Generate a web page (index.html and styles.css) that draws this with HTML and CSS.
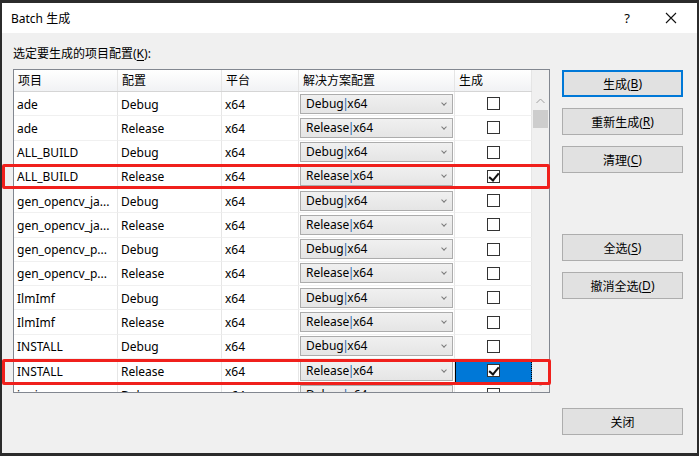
FILE: index.html
```html
<!DOCTYPE html>
<html>
<head>
<meta charset="utf-8">
<link rel="stylesheet" href="styles.css">
</head>
<body>
<div class="window">
  <div class="titlebar">
    <span class="title">Batch 生成</span>
    <span class="tb-help">?</span>
    <span class="tb-close"><svg width="12" height="12" viewBox="0 0 12 12"><path d="M1 1 L11 11 M11 1 L1 11" stroke="#111" stroke-width="1.1" fill="none"/></svg></span>
  </div>
  <div class="content">
    <div class="left">
      <div class="label">选定要生成的项目配置(<u>K</u>):</div>
      <div class="grid">
        <div class="table">
          <div class="hdr">
            <div class="hc">项目</div><div class="hc">配置</div><div class="hc">平台</div><div class="hc">解决方案配置</div><div class="hc">生成</div>
          </div>
          <div class="rows">
            <div class="row"><div class="c">ade</div><div class="c">Debug</div><div class="c">x64</div><div class="c cc"><div class="combo">Debug<span class="pipe">|</span>x64<span class="arr"></span></div></div><div class="c cb"><span class="chk"></span></div></div>
            <div class="row"><div class="c">ade</div><div class="c">Release</div><div class="c">x64</div><div class="c cc"><div class="combo">Release<span class="pipe">|</span>x64<span class="arr"></span></div></div><div class="c cb"><span class="chk"></span></div></div>
            <div class="row"><div class="c">ALL_BUILD</div><div class="c">Debug</div><div class="c">x64</div><div class="c cc"><div class="combo">Debug<span class="pipe">|</span>x64<span class="arr"></span></div></div><div class="c cb"><span class="chk"></span></div></div>
            <div class="row"><div class="c">ALL_BUILD</div><div class="c">Release</div><div class="c">x64</div><div class="c cc"><div class="combo">Release<span class="pipe">|</span>x64<span class="arr"></span></div></div><div class="c cb"><span class="chk on"></span></div></div>
            <div class="row"><div class="c">gen_opencv_ja...</div><div class="c">Debug</div><div class="c">x64</div><div class="c cc"><div class="combo">Debug<span class="pipe">|</span>x64<span class="arr"></span></div></div><div class="c cb"><span class="chk"></span></div></div>
            <div class="row"><div class="c">gen_opencv_ja...</div><div class="c">Release</div><div class="c">x64</div><div class="c cc"><div class="combo">Release<span class="pipe">|</span>x64<span class="arr"></span></div></div><div class="c cb"><span class="chk"></span></div></div>
            <div class="row"><div class="c">gen_opencv_p...</div><div class="c">Debug</div><div class="c">x64</div><div class="c cc"><div class="combo">Debug<span class="pipe">|</span>x64<span class="arr"></span></div></div><div class="c cb"><span class="chk"></span></div></div>
            <div class="row"><div class="c">gen_opencv_p...</div><div class="c">Release</div><div class="c">x64</div><div class="c cc"><div class="combo">Release<span class="pipe">|</span>x64<span class="arr"></span></div></div><div class="c cb"><span class="chk"></span></div></div>
            <div class="row"><div class="c">IlmImf</div><div class="c">Debug</div><div class="c">x64</div><div class="c cc"><div class="combo">Debug<span class="pipe">|</span>x64<span class="arr"></span></div></div><div class="c cb"><span class="chk"></span></div></div>
            <div class="row"><div class="c">IlmImf</div><div class="c">Release</div><div class="c">x64</div><div class="c cc"><div class="combo">Release<span class="pipe">|</span>x64<span class="arr"></span></div></div><div class="c cb"><span class="chk"></span></div></div>
            <div class="row"><div class="c">INSTALL</div><div class="c">Debug</div><div class="c">x64</div><div class="c cc"><div class="combo">Debug<span class="pipe">|</span>x64<span class="arr"></span></div></div><div class="c cb"><span class="chk"></span></div></div>
            <div class="row"><div class="c">INSTALL</div><div class="c">Release</div><div class="c">x64</div><div class="c cc"><div class="combo">Release<span class="pipe">|</span>x64<span class="arr"></span></div></div><div class="c cb sel"><span class="chk on"></span></div></div>
            <div class="row"><div class="c">ippiw</div><div class="c">Debug</div><div class="c">x64</div><div class="c cc"><div class="combo">Debug<span class="pipe">|</span>x64<span class="arr"></span></div></div><div class="c cb"><span class="chk"></span></div></div>
          </div>
        </div>
        <div class="vscroll">
          <div class="sb-top"></div>
          <div class="sb-up"><svg width="9" height="6" viewBox="0 0 9 6"><path d="M0.5 5 L4.5 1 L8.5 5" stroke="#a0a0a0" fill="none"/></svg></div>
          <div class="sb-thumb"></div>
          <div class="sb-track"></div>
          <div class="sb-down"><svg width="9" height="6" viewBox="0 0 9 6"><path d="M0.5 1 L4.5 5 L8.5 1" stroke="#a0a0a0" fill="none"/></svg></div>
        </div>
      </div>
    </div>
    <div class="right">
      <div class="btn default">生成(<u>B</u>)</div>
      <div class="btn">重新生成(<u>R</u>)</div>
      <div class="btn">清理(<u>C</u>)</div>
      <div class="spacer1"></div>
      <div class="btn">全选(<u>S</u>)</div>
      <div class="btn">撤消全选(<u>D</u>)</div>
      <div class="spacer2"></div>
      <div class="btn">关闭</div>
    </div>
  </div>
  <div class="mark mark1"></div>
  <div class="mark mark2"></div>
</div>
</body>
</html>
```

FILE: styles.css
```css
* { box-sizing: border-box; }
html, body { margin: 0; padding: 0; }
body {
  width: 699px; height: 456px; overflow: hidden;
  background: #2b2b2b;
  padding: 3px 2px 3px 2px;
  font-family: "Noto Sans", "Noto Sans CJK SC", sans-serif;
  font-size: 12px;
  color: #000;
}
.window {
  position: relative;
  width: 695px; height: 450px;
  background: #f0f0f0;
  display: flex; flex-direction: column;
}
.titlebar {
  height: 30px; background: #fff;
  display: flex; align-items: center;
  padding-left: 9px;
}
.title { flex: 1; font-size: 12px; }
.tb-help { width: 44px; text-align: center; font-size: 13px; margin-right: 0px; }
.tb-close { width: 44px; display: flex; justify-content: center; align-items: center; margin-right: 4px; }
.content { flex: 1; display: flex; }
.left { width: 548px; padding-left: 11px; display: flex; flex-direction: column; }
.label { height: 36px; padding-top: 12px; line-height: 17px; }
.grid {
  width: 537px; height: 324px;
  border: 1px solid #828790;
  background: #fff;
  display: flex;
}
.table { width: 518px; display: flex; flex-direction: column; }
.hdr {
  height: 22px; display: grid;
  grid-template-columns: 104px 104px 77px 156px 77px;
  background: linear-gradient(#ffffff, #f1f2f4);
  border-bottom: 1px solid #d5d5d5;
}
.hc { padding-left: 4px; line-height: 21px; border-right: 1px solid #e5e5e5; }
.rows { height: 300px; overflow: hidden; }
.row {
  height: 24.27px; display: grid;
  grid-template-columns: 104px 104px 77px 156px 77px;
}
.c {
  padding-left: 3px; padding-top: 1px; display: flex; align-items: center;
  border-right: 1px solid #e6e6e6; border-bottom: 1px solid #f0f0f0;
  white-space: nowrap; overflow: hidden;
}
.cc { padding-left: 1px; padding-top: 0; }
.combo {
  width: 153px; height: 20px;
  border: 1px solid #acacac;
  background: linear-gradient(#f0f0f0, #e5e5e5);
  padding-left: 5px; line-height: 18px;
  position: relative;
}
.pipe { color: #1b5fa8; margin: 0 -1.5px; }
.arr {
  position: absolute; right: 6px; top: 6px;
  width: 4px; height: 4px;
  border-right: 1px solid #7a7a7a; border-bottom: 1px solid #7a7a7a;
  transform: rotate(45deg);
}
.cb { justify-content: center; padding-left: 0; padding-top: 0; }
.chk {
  width: 13px; height: 13px; border: 1px solid #333; background: #fff;
  position: relative;
}
.chk.on::after {
  content: ""; position: absolute; left: 3px; top: 0px;
  width: 4px; height: 8px;
  border-right: 2px solid #111; border-bottom: 2px solid #111;
  transform: rotate(40deg);
}
.sel { background: #0078d7; border-left: 1px solid #000; border-right: 1px dotted #000; }
.vscroll { width: 17px; display: flex; flex-direction: column; background: #f0f0f0; }
.sb-top { height: 22px; background: #f0f0f0; }
.sb-up, .sb-down { height: 17px; display: flex; justify-content: center; align-items: center; }
.sb-thumb { height: 18px; background: #cdcdcd; margin: 1px 1px 0 1px; }
.sb-track { flex: 1; }
.right { padding-left: 12px; padding-top: 37px; display: flex; flex-direction: column; }
.btn {
  width: 121px; height: 27px;
  background: #e1e1e1; border: 1px solid #adadad;
  display: flex; justify-content: center; align-items: center;
  margin-bottom: 11px;
}
.btn.default { border: 2px solid #0078d7; }
.spacer1 { height: 50px; }
.spacer2 { height: 98px; }
u { text-decoration-thickness: 1px; text-underline-offset: 2px; }
.mark { position: absolute; border: 3px solid #f0201c; border-radius: 2px; }
.mark1 { left: 0px; top: 161px; width: 548px; height: 25px; }
.mark2 { left: 0px; top: 356px; width: 549px; height: 26px; }
```
